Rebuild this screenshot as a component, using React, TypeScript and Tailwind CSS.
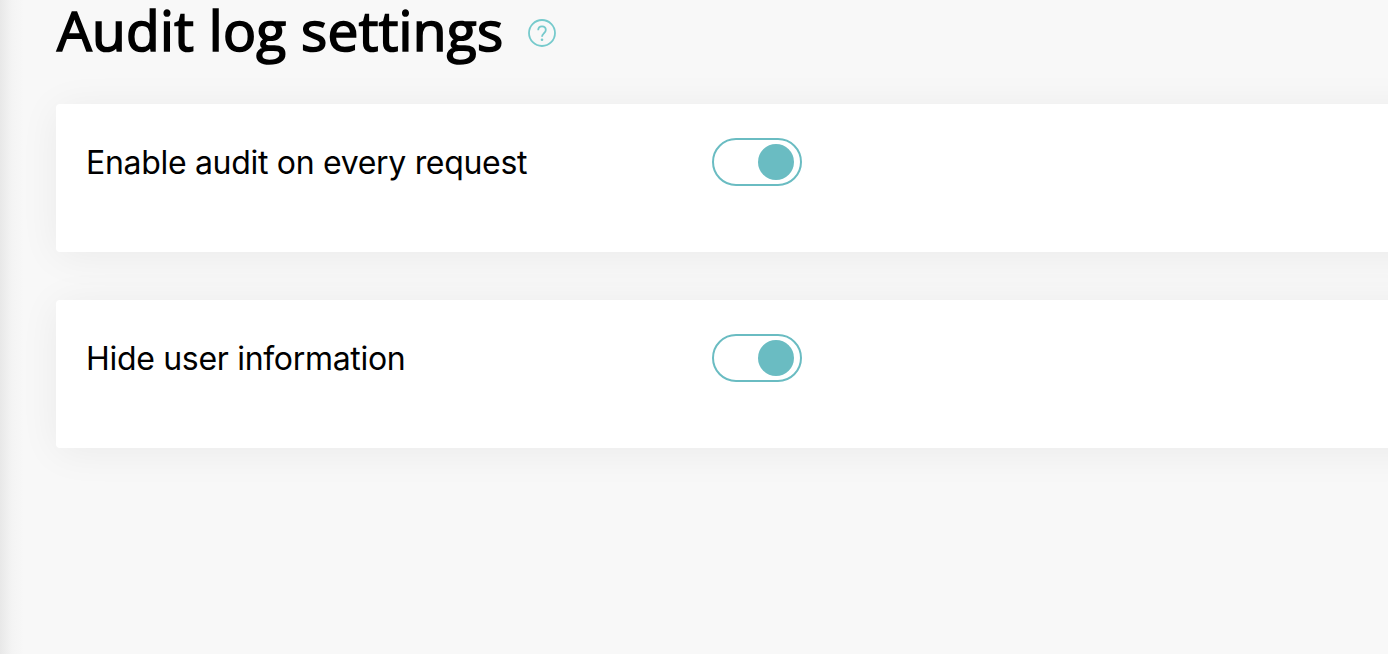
interface ToggleRowProps {
  label: string;
}

const Toggle = () => (
  <button
    type="button"
    role="switch"
    aria-checked="true"
    className="flex h-12 w-[90px] items-center justify-end rounded-full border-2 border-[#6abcc2] bg-white pr-1.5"
  >
    <span className="size-9 rounded-full bg-[#6abcc2]" />
  </button>
);

const ToggleRow = ({ label }: ToggleRowProps) => (
  <div className="flex h-[148px] items-start rounded-sm bg-white pt-[34px] pl-[30px] shadow-[0_4px_40px_rgba(0,0,0,0.06)]">
    <div className="w-[626px] text-[32px] leading-[50px] tracking-[-0.31px] whitespace-nowrap">{label}</div>
    <Toggle />
  </div>
);

const HelpIcon = () => (
  <svg width="28" height="28" viewBox="0 0 28 28" fill="none" stroke="#76cacc" strokeWidth="1.8">
    <circle cx="14" cy="14" r="13" />
    <path d="M10.2 11.2c0-2.2 1.6-3.8 3.8-3.8s3.8 1.5 3.8 3.6c0 1.6-.9 2.4-1.9 3.3-1.1 1-1.9 1.7-1.9 3.4" />
    <circle cx="14" cy="20.8" r="1.3" fill="#76cacc" stroke="none" />
  </svg>
);

export default function App() {
  return (
    <div className="flex h-[654px] w-full overflow-hidden bg-[#f8f8f8] font-['Inter','DejaVu_Sans',sans-serif] text-black">
      <div className="w-6 shrink-0 bg-linear-to-r from-[#e8e8e8] via-[#f4f4f4] via-50% to-[#f8f8f8]" />
      <main className="-mr-12 flex grow flex-col pl-8">
        <header className="flex h-[104px] items-start gap-6">
          <h1 className="w-[448px] pl-px font-['Open_Sans','DejaVu_Sans',sans-serif] text-[55px] leading-[60px] font-normal tracking-[0.3px] whitespace-nowrap [-webkit-text-stroke:1.7px_black]">
            Audit log settings
          </h1>
          <div className="pt-[19px]">
            <HelpIcon />
          </div>
        </header>
        <div className="flex flex-col gap-12">
          <ToggleRow label="Enable audit on every request" />
          <ToggleRow label="Hide user information" />
        </div>
      </main>
    </div>
  );
}
